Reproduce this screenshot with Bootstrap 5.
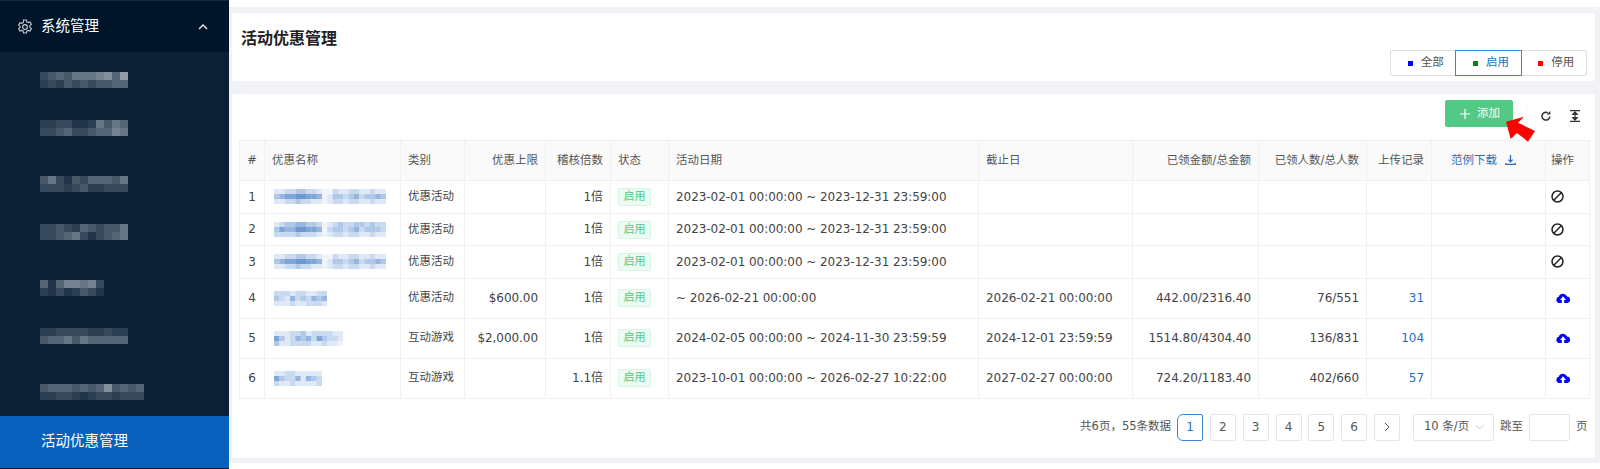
<!doctype html>
<html lang="zh-CN"><head><meta charset="utf-8">
<link href="https://cdn.jsdelivr.net/npm/bootstrap@5.3.0/dist/css/bootstrap.min.css" rel="stylesheet">
<style>
html,body{height:469px;overflow:hidden;background:#fff}
body{font:12px/1.5 "DejaVu Sans","Noto Sans CJK SC",sans-serif;color:#444}
.shell{height:469px}
.side{width:229px;background:#0c2035;border-top:1px solid #16293c;border-bottom:1px solid #0a1a2c}
.side-head{height:51px;background:#001529;color:#fff;padding:0 17px;font-size:14.5px}
.side-item{height:52px;padding-left:40px}
.side-active{background:#0960bd;color:#fff;font-size:14.5px;margin-top:auto;height:52px;padding-left:41px}
.main-col{padding-top:7px;min-width:0}
.canvas{background:#f0f2f5;height:456px;padding:6px 5px 5px 3px}
.pane{background:#fff;border-radius:2px}
.pane-head{height:68px;padding:15px 8px 5px 9px}
.pane-title{font-size:16px;font-weight:700;color:#222;line-height:22px;margin:0}
.seg .btn{width:66.34px;height:26px;padding:0 0 0 5px;border:1px solid #dcdee2;border-radius:0;font-size:11.5px;color:#555;background:#fff;display:flex;align-items:center;justify-content:center;gap:8px}
.seg .btn:first-child{border-radius:2px 0 0 2px}
.seg .btn:last-child{border-radius:0 2px 2px 0}
.seg .btn.on{border-color:#3f86d0;color:#2a6ebb;z-index:1}
.dot{width:5px;height:5px;display:block}
.pane-body{margin-top:13px;height:364px;padding:6px 6px 0 7px;position:relative}
.tools{height:40px;padding:0 9px 0 0}
.add-btn{width:68px;height:27px;background:#52c985;border:1px solid #52c985;border-radius:2px;color:#fff;font-size:11.5px;padding:0 0 0 2px;margin-right:13px;gap:7px}
.add-btn:hover{background:#52c985;color:#fff}
.vsep{width:1px;height:22px;background:#f4f4f4;margin:2px 14px 0 0}
.ti{margin-top:10px}
.arrow{position:absolute;left:1272px;top:20px}
.promo{table-layout:fixed;width:1350px;margin:0;--bs-table-color:#444;--bs-table-border-color:#f0f0f0;font-size:12px;letter-spacing:-.05px}
.promo th,.promo td{padding:0 7px;vertical-align:middle;border-color:#f0f0f0}
.promo th{height:40px;background:#fafafa;font-weight:400;color:#555;font-size:11.5px;letter-spacing:0}
.promo .short td{height:32.5px}
.promo .tall td{height:40px}
.promo .cjk{font-size:11.5px;letter-spacing:0}
.promo a{color:#2a6ebb;text-decoration:none}
.promo .dl-head{padding-left:19px}
.promo .op-head,.promo .op-ban{padding-left:5px}
.promo .act{padding-left:10px}
.mz-name svg{margin-left:2px}
.tag{display:inline-block;width:33px;height:18px;line-height:16px;text-align:center;background:#edfbf2;border:1px solid #d7f5e2;border-radius:2px;color:#52c985;font-size:11px;vertical-align:middle;letter-spacing:0}
.ban{display:block}
.pager{margin-top:15px;height:27px;font-size:11.5px;color:#555;gap:6px;padding-right:1.5px}
.pager .pagination{margin:0;gap:6.83px;--bs-pagination-font-size:12px}
.pager .page-link,.pager .page-item:not(:first-child) .page-link{width:26px;height:27px;padding:0;border-radius:2px;border:1px solid #e4e6ea;color:#555;display:flex;align-items:center;justify-content:center;margin:0}
.pager .active .page-link{background:#fff;color:#2a6ebb;border-color:#3f86d0}
.size-pick{width:81px;height:27px;border:1px solid #e4e6ea;border-radius:2px;padding:0 9px 0 10px;margin-left:7px}
.jump-box{width:41px;height:27px;border:1px solid #e4e6ea;border-radius:2px;display:block}
</style></head><body>
<div class="shell d-flex">
 <aside class="side d-flex flex-column flex-shrink-0">
  <div class="side-head d-flex align-items-center">
   <svg width="16" height="16" viewBox="0 0 16 16" fill="none" stroke="#c8ced6" stroke-width="1.1"><path d="M6.6 1h2.8l.4 1.9 1.3.7 1.9-.6 1.4 2.4-1.5 1.3v1.6l1.5 1.3-1.4 2.4-1.9-.6-1.3.7-.4 1.9H6.6l-.4-1.9-1.3-.7-1.9.6-1.4-2.4 1.5-1.3V7.4L1.6 6.1 3 3.7l1.9.6 1.3-.7z"/><circle cx="8" cy="8" r="2.4"/></svg>
   <span class="ms-2">系统管理</span>
   <svg class="ms-auto me-1" width="10" height="6" viewBox="0 0 10 6" fill="none" stroke="#e8ecf0" stroke-width="1.4"><path d="M1 5l4-4 4 4"/></svg>
  </div>
  <div class="side-item mz" data-top="20" data-w="8" data-h="8" data-rows="34546667859|23243434455"></div>
  <div class="side-item mz" data-top="16" data-w="8" data-h="8" data-rows="22331126465|33453345576"></div>
  <div class="side-item mz" data-top="20" data-w="8" data-h="8" data-rows="46314355546|33323422333"></div>
  <div class="side-item mz" data-top="16" data-w="8" data-h="8" data-rows="33432543446|33456313456"></div>
  <div class="side-item mz" data-top="20" data-w="8" data-h="8" data-rows="51577673|21312431"></div>
  <div class="side-item mz" data-top="16" data-w="8" data-h="8" data-rows="22333322322|45564655555"></div>
  <div class="side-item mz" data-top="20" data-w="8" data-h="8" data-rows="4555454584545|2233212332333"></div>
  <div class="side-active d-flex align-items-center">活动优惠管理</div>
 </aside>
 <main class="main-col flex-grow-1">
  <div class="canvas">
  <section class="pane pane-head d-flex flex-column">
   <h1 class="pane-title">活动优惠管理</h1>
   <div class="seg btn-group ms-auto mt-auto" role="group">
    <button class="btn"><i class="dot" style="background:#00f"></i>全部</button>
    <button class="btn on"><i class="dot" style="background:#080"></i>启用</button>
    <button class="btn"><i class="dot" style="background:#f00"></i>停用</button>
   </div>
  </section>
  <section class="pane pane-body">
   <div class="tools d-flex align-items-start justify-content-end">
    <button class="btn add-btn d-flex align-items-center justify-content-center"><svg width="10" height="10" viewBox="0 0 10 10" stroke="#fff" stroke-width="1.2"><path d="M5 0v10M0 5h10"/></svg>添加</button>
    <span class="vsep"></span>
    <svg class="ti" style="margin-right:19px" width="10" height="11" viewBox="0 0 10 11" fill="none" stroke="#333" stroke-width="1.5"><path d="M8.800 6.500A3.900 3.900 0 1 1 6.800 2.800"/><path d="M9.300 1v3.600H5.700z" fill="#333" stroke="none"/></svg>
    <svg class="ti" width="10" height="12" viewBox="0 0 10 12" fill="none" stroke="#333" stroke-width="1.200"><path d="M0 .7h10M0 11.300h10M5 2v8"/><path d="M2.800 4.400L5 2l2.200 2.400zM2.800 7.600L5 10l2.200-2.400z" fill="#333"/></svg>
   </div>
   <svg class="arrow" width="34" height="30" viewBox="0 0 34 30"><path d="M2 7.700L20 2.700l-6 6L31 17l-7 10.700L13 19l-6.300 6z" fill="#f00"/></svg>
   <table class="table table-bordered promo">
    <colgroup><col style="width:25px"><col style="width:136px"><col style="width:64px"><col style="width:81px"><col style="width:65px"><col style="width:58px"><col style="width:310px"><col style="width:154px"><col style="width:126px"><col style="width:108px"><col style="width:65px"><col style="width:114px"><col style="width:44px"></colgroup>
    <thead><tr><th class="text-center">#</th><th>优惠名称</th><th>类别</th><th class="text-end">优惠上限</th><th class="text-end">稽核倍数</th><th>状态</th><th>活动日期</th><th>截止日</th><th class="text-end">已领金额/总金额</th><th class="text-end">已领人数/总人数</th><th class="text-end">上传记录</th><th class="dl-head"><a href="#">范例下载<svg class="ms-2" width="11" height="10" viewBox="0 0 11 10" fill="none" stroke="#2a6ebb" stroke-width="1.3"><path d="M5.500 0v6.500M3.300 4.600l2.200 2.200 2.200-2.200M.8 8v1.300h9.400V8"/></svg></a></th><th class="op-head">操作</th></tr></thead>
    <tbody>
     <tr class="short"><td class="text-center">1</td><td class="mz-name mz" data-w="5.33" data-h="5" data-tint="1" data-rows="112233221002112211211|345566554013323423343|112232211012212211211"></td><td class="cjk">优惠活动</td><td></td><td class="text-end">1倍</td><td><span class="tag">启用</span></td><td>2023-02-01 00:00:00 ~ 2023-12-31 23:59:00</td><td></td><td></td><td></td><td></td><td></td><td class="op-ban"><svg class="ban" width="13" height="13" viewBox="0 0 14 14" fill="none" stroke="#222" stroke-width="1.6"><circle cx="7" cy="7" r="5.900"/><path d="M3 11l8-8"/></svg></td></tr>
     <tr class="short"><td class="text-center">2</td><td class="mz-name mz" data-w="5.33" data-h="5" data-tint="1" data-rows="123344332012322332322|354466554023323423332|222232221012212211211"></td><td class="cjk">优惠活动</td><td></td><td class="text-end">1倍</td><td><span class="tag">启用</span></td><td>2023-02-01 00:00:00 ~ 2023-12-31 23:59:00</td><td></td><td></td><td></td><td></td><td></td><td class="op-ban"><svg class="ban" width="13" height="13" viewBox="0 0 14 14" fill="none" stroke="#222" stroke-width="1.6"><circle cx="7" cy="7" r="5.900"/><path d="M3 11l8-8"/></svg></td></tr>
     <tr class="short"><td class="text-center">3</td><td class="mz-name mz" data-w="5.33" data-h="5" data-tint="1" data-rows="112233221002112211211|345566554013323423343|112232211012212211211"></td><td class="cjk">优惠活动</td><td></td><td class="text-end">1倍</td><td><span class="tag">启用</span></td><td>2023-02-01 00:00:00 ~ 2023-12-31 23:59:00</td><td></td><td></td><td></td><td></td><td></td><td class="op-ban"><svg class="ban" width="13" height="13" viewBox="0 0 14 14" fill="none" stroke="#222" stroke-width="1.6"><circle cx="7" cy="7" r="5.900"/><path d="M3 11l8-8"/></svg></td></tr>
     <tr class="tall"><td class="text-center">4</td><td class="mz-name mz" data-w="5.33" data-h="5" data-tint="1" data-rows="2221221122|3214232434|1112112221"></td><td class="cjk">优惠活动</td><td class="text-end">$600.00</td><td class="text-end">1倍</td><td><span class="tag">启用</span></td><td>~ 2026-02-21 00:00:00</td><td>2026-02-21 00:00:00</td><td class="text-end">442.00/2316.40</td><td class="text-end">76/551</td><td class="text-end"><a href="#">31</a></td><td></td><td class="act"><svg class="d-block" width="14" height="10" viewBox="0 0 14 10"><path d="M3.300 10A3.200 3.200 0 0 1 2.800 3.700 4.400 4.400 0 0 1 11 3.600 3.200 3.200 0 0 1 10.800 10H8.200V7h1.800L7 3.200 4 7h1.800v3z" fill="#00f"/></svg></td></tr>
     <tr class="tall"><td class="text-center">5</td><td class="mz-name mz" data-w="5.33" data-h="5" data-tint="1" data-rows="1112231222211|5312434253221|3112222112110"></td><td class="cjk">互动游戏</td><td class="text-end">$2,000.00</td><td class="text-end">1倍</td><td><span class="tag">启用</span></td><td>2024-02-05 00:00:00 ~ 2024-11-30 23:59:59</td><td>2024-12-01 23:59:59</td><td class="text-end">1514.80/4304.40</td><td class="text-end">136/831</td><td class="text-end"><a href="#">104</a></td><td></td><td class="act"><svg class="d-block" width="14" height="10" viewBox="0 0 14 10"><path d="M3.300 10A3.200 3.200 0 0 1 2.800 3.700 4.400 4.400 0 0 1 11 3.600 3.200 3.200 0 0 1 10.800 10H8.200V7h1.800L7 3.200 4 7h1.800v3z" fill="#00f"/></svg></td></tr>
     <tr class="tall"><td class="text-center">6</td><td class="mz-name mz" data-w="5.33" data-h="5" data-tint="1" data-rows="112211111|532241432|211211112"></td><td class="cjk">互动游戏</td><td></td><td class="text-end">1.1倍</td><td><span class="tag">启用</span></td><td>2023-10-01 00:00:00 ~ 2026-02-27 10:22:00</td><td>2027-02-27 00:00:00</td><td class="text-end">724.20/1183.40</td><td class="text-end">402/660</td><td class="text-end"><a href="#">57</a></td><td></td><td class="act"><svg class="d-block" width="14" height="10" viewBox="0 0 14 10"><path d="M3.300 10A3.200 3.200 0 0 1 2.800 3.700 4.400 4.400 0 0 1 11 3.600 3.200 3.200 0 0 1 10.800 10H8.200V7h1.800L7 3.200 4 7h1.800v3z" fill="#00f"/></svg></td></tr>
    </tbody>
   </table>
   <nav class="pager d-flex align-items-center justify-content-end">
    <span>共6页，55条数据</span>
    <ul class="pagination">
     <li class="page-item active"><a class="page-link" href="#">1</a></li>
     <li class="page-item"><a class="page-link" href="#">2</a></li>
     <li class="page-item"><a class="page-link" href="#">3</a></li>
     <li class="page-item"><a class="page-link" href="#">4</a></li>
     <li class="page-item"><a class="page-link" href="#">5</a></li>
     <li class="page-item"><a class="page-link" href="#">6</a></li>
     <li class="page-item"><a class="page-link" href="#"><svg width="6" height="10" viewBox="0 0 6 10" fill="none" stroke="#555" stroke-width="1"><path d="M1 1l4 4-4 4"/></svg></a></li>
    </ul>
    <div class="size-pick d-flex align-items-center justify-content-between"><span>10 条/页</span><svg width="9" height="6" viewBox="0 0 9 6" fill="none" stroke="#c5c8ce"><path d="M.5 1l4 4 4-4"/></svg></div>
    <span>跳至</span><span class="jump-box"></span><span>页</span>
   </nav>
  </section>
  </div>
 </main>
</div>
<script>
document.querySelectorAll('.mz').forEach(function(el){
 var rows=el.dataset.rows.split('|'),w=+el.dataset.w,h=+el.dataset.h,tint=el.dataset.tint;
 var dark=['#1a2e44','#22344a','#2b3d50','#39495c','#475768','#566575','#667584','#758391','#84909c','#939da8'];
 var blue=['#f1f5fb','#dfe8f6','#c9d9f0','#b1c9e8','#96b6df','#7ea5d6','#6a98d0'];
 var pal=tint?blue:dark;
 var s=document.createElementNS('http://www.w3.org/2000/svg','svg');
 var n=rows[0].length;
 s.setAttribute('width',n*w);s.setAttribute('height',rows.length*h);
 s.style.display='block';
 if(el.dataset.top)s.style.marginTop=el.dataset.top+'px';
 rows.forEach(function(r,y){for(var x=0;x<r.length;x++){var c=document.createElementNS('http://www.w3.org/2000/svg','rect');
  c.setAttribute('x',x*w);c.setAttribute('y',y*h);c.setAttribute('width',w+.3);c.setAttribute('height',h);c.setAttribute('fill',pal[+r[x]]);s.appendChild(c);}});
 el.appendChild(s);
});
</script>
<script src="https://cdn.jsdelivr.net/npm/bootstrap@5.3.0/dist/js/bootstrap.bundle.min.js"></script>
</body></html>
